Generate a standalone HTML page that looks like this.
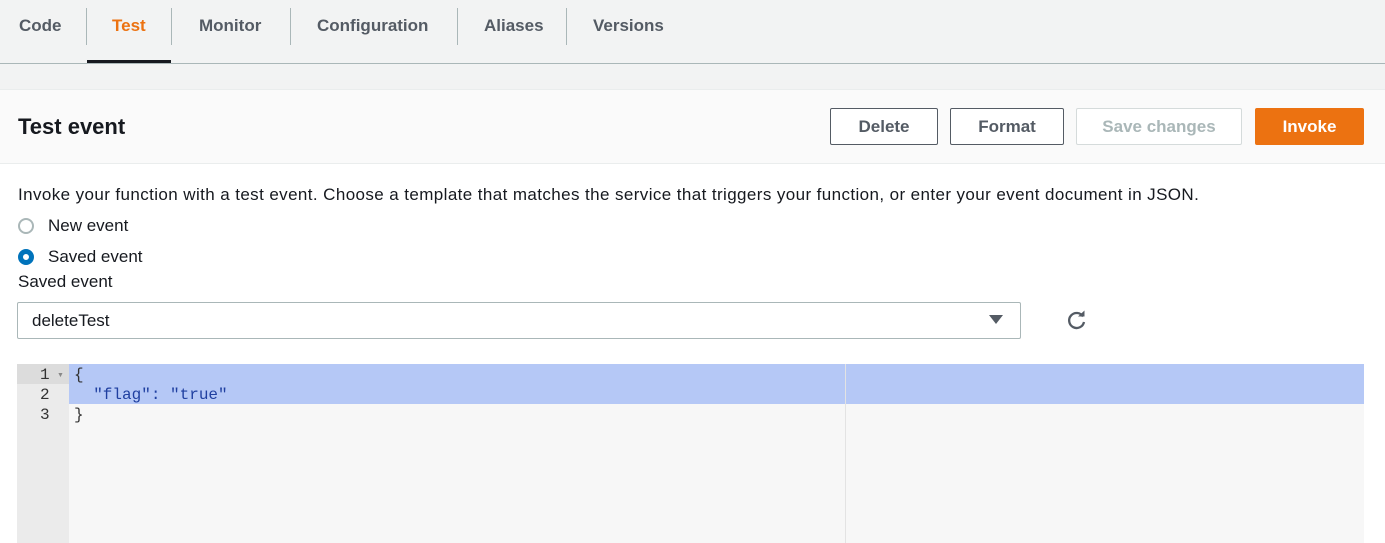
<!DOCTYPE html>
<html><head><style>
*{box-sizing:border-box;margin:0;padding:0}
body{width:1385px;height:543px;overflow:hidden;background:#fff;font-family:"Liberation Sans",Arial,sans-serif;color:#16191f;position:relative}
.abs{position:absolute}
.tabs{left:0;top:0;width:1385px;height:64px;background:#f2f3f3;border-bottom:1px solid #aab7b8}
.tab{position:absolute;top:16px;font-size:17px;font-weight:bold;color:#545b64}
.sep{position:absolute;top:8px;width:1px;height:37px;background:#aab7b8}
.band{left:0;top:64px;width:1385px;height:26px;background:#f2f3f3;border-bottom:1px solid #eaeded}
.hdr{left:0;top:90px;width:1385px;height:74px;background:#fafafa;border-bottom:1px solid #eaeded}
.btn{position:absolute;top:108px;height:37px;border:1px solid #545b64;border-radius:2px;background:#fff;font-weight:bold;font-size:17px;color:#545b64;text-align:center;line-height:35px}
.txt{font-size:17px;color:#16191f}
.radio{position:absolute;width:16px;height:16px;border-radius:50%}
.code{font-family:"Liberation Mono",monospace;font-size:16px;color:#1f3fa0}
</style></head><body>
<div class="abs tabs">
<div class="tab" style="left:19px">Code</div>
<div class="sep" style="left:86px"></div>
<div class="tab" style="left:112px;color:#ec7211">Test</div>
<div class="sep" style="left:171px"></div>
<div class="tab" style="left:199px">Monitor</div>
<div class="sep" style="left:290px"></div>
<div class="tab" style="left:317px">Configuration</div>
<div class="sep" style="left:457px"></div>
<div class="tab" style="left:484px">Aliases</div>
<div class="sep" style="left:566px"></div>
<div class="tab" style="left:593px">Versions</div>
<div class="abs" style="left:87px;top:60px;width:84px;height:3px;background:#16191f"></div>
</div>
<div class="abs band"></div>
<div class="abs hdr"><div class="abs" style="left:18px;top:24px;font-size:22px;font-weight:bold">Test event</div></div>
<div class="btn" style="left:830px;width:108px">Delete</div>
<div class="btn" style="left:950px;width:114px">Format</div>
<div class="btn" style="left:1076px;width:166px;border-color:#d5dbdb;color:#aab7b8">Save changes</div>
<div class="btn" style="left:1255px;width:109px;border-color:#ec7211;background:#ec7211;color:#fff">Invoke</div>
<div class="abs txt" style="left:18px;top:185px;letter-spacing:0.4px">Invoke your function with a test event. Choose a template that matches the service that triggers your function, or enter your event document in JSON.</div>
<div class="radio" style="left:18px;top:218px;border:2px solid #aab7b8"></div>
<div class="abs txt" style="left:48px;top:216px">New event</div>
<div class="radio" style="left:18px;top:249px;border:5px solid #0073bb;background:#fff"></div>
<div class="abs txt" style="left:48px;top:247px">Saved event</div>
<div class="abs txt" style="left:18px;top:272px">Saved event</div>
<div class="abs" style="left:17px;top:302px;width:1004px;height:37px;border:1px solid #aab7b8;border-radius:2px"></div>
<div class="abs txt" style="left:32px;top:311px">deleteTest</div>
<svg class="abs" style="left:989px;top:315px" width="14" height="10"><path d="M0 0H14L7 9Z" fill="#545b64"/></svg>
<svg class="abs" style="left:1066px;top:309px" width="22" height="22" viewBox="0 0 22 22"><path d="M17 7.5A7.5 7.5 0 1 0 18 13" fill="none" stroke="#545b64" stroke-width="2.3"/><path d="M12 7.5H18.5V1.5Z" fill="#545b64"/></svg>
<div class="abs" style="left:17px;top:364px;width:1347px;height:179px;background:#f7f7f7"></div>
<div class="abs" style="left:17px;top:364px;width:52px;height:179px;background:#ebebeb"></div>
<div class="abs" style="left:17px;top:364px;width:52px;height:20px;background:#dcdcdc"></div>
<div class="abs" style="left:69px;top:364px;width:1295px;height:40px;background:#b5c8f6"></div>
<div class="abs" style="left:845px;top:364px;width:1px;height:179px;background:#e3e3e3"></div>
<div class="abs code" style="left:40px;top:365px;color:#333;line-height:20px">1<br>2<br>3</div>
<div class="abs" style="left:57px;top:372px;font-size:7px;color:#888">▼</div>
<div class="abs code" style="left:74px;top:365px;line-height:20px;white-space:pre;color:#1f3fa0"><span style="color:#333">{</span>
  "flag": "true"
<span style="color:#333">}</span></div>
</body></html>
